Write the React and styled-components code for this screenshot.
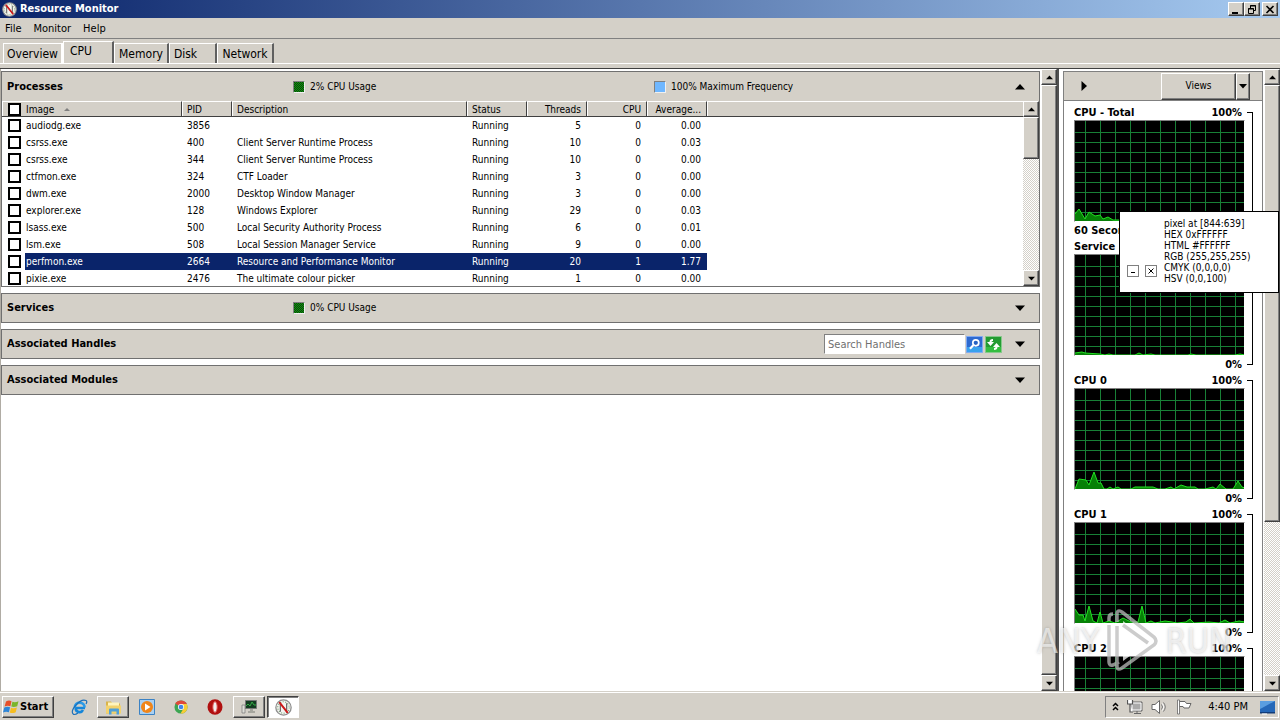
import React from "react";
import styled, { createGlobalStyle, css } from "styled-components";

const GlobalStyle = createGlobalStyle`
  * {
    box-sizing: border-box;
  }

  body {
    margin: 0;
    background: #d4d0c8;
    color: #000;
    font-family: "DejaVu Sans Condensed", Tahoma, "DejaVu Sans", sans-serif;
    font-size: 10px;
    line-height: 14px;
    overflow: hidden;
  }

  button,
  input {
    font: inherit;
    color: inherit;
    margin: 0;
    padding: 0;
    border-radius: 0;
  }
`;

const raised = css`
  border: 1px solid;
  border-color: #fff #404040 #404040 #fff;
  box-shadow: inset -1px -1px 0 #808080;
  background: #d4d0c8;
`;

const Screen = styled.div`
  display: flex;
  flex-direction: column;
  height: 100vh;
`;

/* Title bar and menu */
const TitleBar = styled.header`
  display: flex;
  align-items: center;
  gap: 3px;
  height: 18px;
  flex: none;
  padding: 0 2px;
  background: linear-gradient(90deg, #0a246a, #a6caf0);
  color: #fff;
`;

const Title = styled.h1`
  flex: 1;
  margin: 0;
  font-size: 11px;
  line-height: 16px;
`;

const WindowButtons = styled.div`
  display: flex;
`;

const WindowButton = styled.button`
  ${raised}
  display: flex;
  align-items: center;
  justify-content: center;
  width: 16px;
  height: 14px;
  margin-left: ${(p) => (p.$spaced ? "2px" : "0")};
`;

const MenuBar = styled.nav`
  display: flex;
  gap: 12px;
  height: 21px;
  flex: none;
  padding: 4px 5px 2px;
  border-bottom: 1px solid #808080;
`;

const MenuItem = styled.button`
  border: 0;
  background: none;
  font-size: 11px;
`;

/* Tabs */
const TabStrip = styled.div`
  display: flex;
  align-items: flex-end;
  height: 24px;
  flex: none;
  padding-left: 3px;
`;

const Tab = styled.button`
  width: ${(p) => p.$width}px;
  height: ${(p) => (p.$active ? 22 : 20)}px;
  padding: ${(p) => (p.$active ? "0 14px 3px 0" : p.$left ? "0 14px 0 0" : "0")};
  border: solid #fff;
  border-width: 1px 2px 0 1px;
  border-right-color: ${(p) => (p.$flat ? "#fff" : "#606060")};
  background: #d4d0c8;
  font-size: 12px;
`;

const TabEdge = styled.div`
  height: 6px;
  flex: none;
  border-top: 1px solid #fff;
  border-bottom: 1px solid #404040;
`;

const Main = styled.main`
  display: flex;
  flex: 1;
  min-height: 0;
  border-bottom: 1px solid #d4d0c8;
`;

const LeftPane = styled.section`
  display: flex;
  flex: 1;
  min-width: 0;
  border-left: 1px solid #b0aca4;
  background: #fff;
`;

const Sections = styled.div`
  display: flex;
  flex-direction: column;
  gap: 6px;
  flex: 1;
  min-width: 0;
  padding: 2px 1px 0 0;
`;

const Section = styled.section`
  border: 1px solid #707070;
`;

const SectionHeader = styled.div`
  display: grid;
  grid-template-columns: 286px 361px 1fr auto;
  align-items: center;
  height: ${(p) => (p.$open ? 29 : 28)}px;
  padding: 0 11px 0 5px;
  background: #d4d0c8;
`;

const SectionTitle = styled.h2`
  margin: 0;
  font-size: 11px;
  line-height: 14px;
`;

const Legend = styled.span`
  display: flex;
  align-items: center;
  gap: 5px;
`;

const Swatch = styled.span`
  width: 12px;
  height: 12px;
  border: 1px solid;
  border-color: #808080 #f0f0f0 #f0f0f0 #808080;
  background: ${(p) => (p.$blue ? "#6fb7ff" : "repeating-conic-gradient(#129012 0 25%, #084808 0 50%) 0 0 / 2px 2px")};
`;

const Toggle = styled.button`
  display: flex;
  grid-column: 4;
  padding: 3px;
  border: 0;
  background: none;
`;

const SearchGroup = styled.form`
  display: flex;
  grid-column: 3;
  justify-self: end;
  margin-right: 9px;
  background: #d4d0c8;
`;

const SearchInput = styled.input`
  width: 141px;
  height: 20px;
  padding: 0 3px;
  border: 1px solid;
  border-color: #808080 #fff #fff #808080;
  background: #fff;
  font-size: 11px;

  &::placeholder {
    color: #707070;
    opacity: 1;
  }
`;

const IconButton = styled.button`
  display: flex;
  align-items: center;
  justify-content: center;
  width: 19px;
  height: 20px;
  border: 0;
  background: none;
`;

/* Process list */
const TableFrame = styled.div`
  display: flex;
  height: 185px;
  background: #fff;
`;

const TableClip = styled.div`
  flex: 1;
  min-width: 0;
  overflow: hidden;
`;

const ProcessTable = styled.table`
  width: 100%;
  table-layout: fixed;
  border-collapse: separate;
  border-spacing: 0;
`;

const HeadCell = styled.th`
  height: 16px;
  padding: 1px 5px 0;
  border-top: 1px solid #fff;
  border-bottom: 1px solid #404040;
  border-right: ${(p) => (p.$last ? "0" : "1px solid #404040")};
  box-shadow: inset 1px 0 0 #fff;
  background: #d4d0c8;
  font-weight: normal;
  line-height: 13px;
  text-align: ${(p) => (p.$right ? "right" : "left")};
  white-space: nowrap;
`;

const Cell = styled.td`
  height: 17px;
  padding: 0 6px 0 5px;
  line-height: 17px;
  text-align: ${(p) => (p.$right ? "right" : "left")};
  white-space: nowrap;
  background: ${(p) => (p.$selected ? "#0a246a" : "#fff")};
  color: ${(p) => (p.$selected ? "#fff" : "#000")};
`;

const ImageCell = styled(Cell)`
  padding: 0;
  background: ${(p) => (p.$selected ? "linear-gradient(90deg, #fff 23px, #0a246a 23px)" : "#fff")};
`;

const CheckLabel = styled.label`
  display: flex;
  align-items: center;
  gap: 5px;
  padding-left: ${(p) => (p.$head ? "1px" : "6px")};
`;

const Check = styled.input`
  appearance: none;
  width: 13px;
  height: 13px;
  border: 2px solid #000;
  background: #fff;
`;

/* Scroll bars */
const ScrollBar = styled.div`
  display: flex;
  flex-direction: column;
  flex: none;
  width: 16px;
  background: repeating-conic-gradient(#fff 0 25%, #d4d0c8 0 50%) 0 0 / 2px 2px;
`;

const ScrollButton = styled.button`
  ${raised}
  display: flex;
  align-items: center;
  justify-content: center;
  flex: none;
  height: 16px;
`;

const Track = styled.div`
  flex: 1;
  min-height: 0;
`;

const Thumb = styled.div`
  ${raised}
  height: ${(p) => p.$size};
`;

/* Right pane */
const RightPane = styled.aside`
  display: flex;
  flex: none;
  width: 223px;
  padding-left: 4px;
  border-left: 2px solid #505050;
  background: #fff;
`;

const GraphColumn = styled.div`
  flex: 1;
  margin: 2px 1px 0 0;
  border: solid #808080;
  border-width: 1px 1px 0 1px;
  overflow: hidden;
`;

const GraphToolbar = styled.div`
  display: flex;
  align-items: center;
  justify-content: space-between;
  height: 29px;
  padding: 0 12px 0 15px;
  border-bottom: 1px solid #808080;
  background: #d4d0c8;
`;

const PlainButton = styled.button`
  display: flex;
  border: 0;
  background: none;
`;

const ViewsGroup = styled.div`
  display: flex;
`;

const ViewsButton = styled.button`
  ${raised}
  display: flex;
  align-items: center;
  justify-content: center;
  width: ${(p) => (p.$arrow ? "14px" : "75px")};
  height: 27px;
`;

const GraphList = styled.div`
  padding: 3px 9px 0 10px;
`;

const GraphBlock = styled.figure`
  display: flex;
  gap: 2px;
  margin: 0;
  height: 134px;
`;

const GraphBody = styled.div`
  flex: 1;
`;

const GraphLabels = styled.figcaption`
  display: flex;
  justify-content: space-between;
  height: 16px;
  padding-right: 3px;
  font-size: 11px;
  font-weight: bold;
  line-height: 18px;
`;

const Plot = styled.svg`
  display: block;
  width: 100%;
  height: 102px;
  border: 1px solid;
  border-color: #808080 #fff #fff #808080;
  background: #000;
`;

const Bracket = styled.span`
  width: 6px;
  margin: 8px 0 7px;
  border: 1px solid #000;
  border-left: 0;
`;

/* Colour picker window floating over the graphs */
const Picker = styled.div`
  position: absolute;
  top: 211px;
  right: 1px;
  display: flex;
  gap: 7px;
  width: 160px;
  height: 82px;
  padding: 6px 7px;
  border: 1px solid #000;
  background: #fff;
`;

const PickerButtons = styled.div`
  display: flex;
  align-items: flex-end;
  gap: 6px;
  padding-bottom: 9px;
`;

const PickerButton = styled.button`
  display: flex;
  align-items: center;
  justify-content: center;
  width: 12px;
  height: 12px;
  border: 1px solid #808080;
  background: #fff;
`;

const PickerText = styled.div`
  line-height: 11px;
  white-space: nowrap;
`;

const Watermark = styled.div`
  position: absolute;
  right: 48px;
  bottom: 46px;
  display: flex;
  align-items: center;
  gap: 4px;
  color: rgba(255, 255, 255, 0.6);
  font-size: 34px;
  line-height: 66px;
  text-shadow: 0 0 3px rgba(90, 90, 90, 0.35);
  pointer-events: none;
`;

/* Taskbar */
const Taskbar = styled.footer`
  display: flex;
  align-items: center;
  flex: none;
  height: 28px;
  padding: 1px 1px 0 2px;
  border-top: 1px solid #fff;
  background: #d4d0c8;
`;

const StartButton = styled.button`
  ${raised}
  display: flex;
  align-items: center;
  width: 52px;
  height: 22px;
  font-size: 11px;
  font-weight: bold;
`;

const TaskList = styled.div`
  display: flex;
  flex: 1;
  gap: 2px;
  padding-left: 9px;
`;

const TaskButton = styled.button`
  display: flex;
  align-items: center;
  justify-content: center;
  width: 32px;
  height: 22px;
  border: 0;
  background: none;
  ${(p) => p.$open && raised}
  ${(p) =>
    p.$pressed &&
    css`
      border: 1px solid;
      border-color: #404040 #fff #fff #404040;
      box-shadow: inset 1px 1px 0 #808080;
      background: #fff;
    `}
`;

const Tray = styled.div`
  display: flex;
  align-items: center;
  gap: 8px;
  height: 22px;
  padding: 0 2px 0 6px;
  border: 1px solid;
  border-color: #808080 #fff #fff #808080;
`;

const Clock = styled.time`
  padding: 0 3px 0 8px;
  font-size: 11px;
`;

const processes = [
  { image: "audiodg.exe", pid: 3856, description: "", threads: 5, cpu: 0, average: "0.00" },
  { image: "csrss.exe", pid: 400, description: "Client Server Runtime Process", threads: 10, cpu: 0, average: "0.03" },
  { image: "csrss.exe", pid: 344, description: "Client Server Runtime Process", threads: 10, cpu: 0, average: "0.00" },
  { image: "ctfmon.exe", pid: 324, description: "CTF Loader", threads: 3, cpu: 0, average: "0.00" },
  { image: "dwm.exe", pid: 2000, description: "Desktop Window Manager", threads: 3, cpu: 0, average: "0.00" },
  { image: "explorer.exe", pid: 128, description: "Windows Explorer", threads: 29, cpu: 0, average: "0.03" },
  { image: "lsass.exe", pid: 500, description: "Local Security Authority Process", threads: 6, cpu: 0, average: "0.01" },
  { image: "lsm.exe", pid: 508, description: "Local Session Manager Service", threads: 9, cpu: 0, average: "0.00" },
  { image: "perfmon.exe", pid: 2664, description: "Resource and Performance Monitor", threads: 20, cpu: 1, average: "1.77", selected: true },
  { image: "pixie.exe", pid: 2476, description: "The ultimate colour picker", threads: 1, cpu: 0, average: "0.00" },
];

// Each point is [x, height above the base line]
const graphs = [
  {
    title: "CPU - Total",
    footer: "60 Seconds",
    points: [[0, 7], [4, 12], [7, 7], [10, 2], [14, 9], [20, 5], [25, 6], [28, 2], [33, 4], [38, 1], [44, 1], [60, 2], [90, 1], [130, 2], [170, 1]],
  },
  {
    title: "Service",
    points: [[0, 2], [7, 3], [10, 2], [25, 1], [30, 0], [34, 1], [38, 0], [60, 0], [64, 2], [68, 0], [76, 1], [80, 0], [113, 0], [116, 1], [121, 0], [160, 0], [165, 1], [170, 0]],
  },
  {
    title: "CPU 0",
    points: [[0, 0], [4, 10], [11, 9], [14, 4], [19, 17], [23, 6], [26, 6], [29, 0], [32, 0], [35, 2], [38, 0], [43, 2], [46, 0], [56, 0], [60, 2], [78, 2], [83, 0], [90, 0], [96, 2], [99, 0], [106, 4], [112, 2], [120, 2], [123, 0], [130, 0], [138, 2], [141, 0], [145, 5], [151, 0], [158, 0], [163, 8], [167, 2], [170, 1]],
  },
  {
    title: "CPU 1",
    points: [[0, 14], [4, 8], [8, 8], [10, 2], [14, 17], [18, 2], [22, 0], [25, 11], [28, 0], [34, 2], [40, 0], [48, 5], [56, 1], [63, 1], [67, 17], [71, 0], [76, 2], [80, 0], [90, 2], [97, 1], [102, 0], [111, 1], [115, 4], [119, 0], [134, 1], [144, 0], [150, 3], [155, 0], [164, 2], [170, 1]],
  },
  { title: "CPU 2", points: [[0, 8], [10, 5], [20, 2], [170, 1]] },
];

const Arrow = ({ dir = "down", size = 7 }) => {
  const turn = { down: 0, up: 180, right: 270 }[dir];
  return (
    <svg width={size} height={size} viewBox="0 0 10 10" aria-hidden="true">
      <path d="M0 2.5h10L5 8z" transform={`rotate(${turn} 5 5)`} />
    </svg>
  );
};

const MonitorIcon = ({ size = 15 }) => (
  <svg width={size} height={size} viewBox="0 0 16 16" aria-hidden="true">
    <circle cx="8" cy="8" r="7.2" fill="#f4f4f0" stroke="#8d8d8d" strokeWidth="1.2" />
    <circle cx="8" cy="8" r="5.4" fill="none" stroke="#77a477" strokeDasharray="1 1.4" />
    <path d="M5 12V4l6 8V4" fill="none" stroke="#555" />
    <path d="M4 3l8 10" stroke="#d01818" strokeWidth="1.8" />
  </svg>
);

const WindowsLogo = () => (
  <svg width="17" height="16" viewBox="0 0 17 16" aria-hidden="true">
    <path d="M3 2.5Q6 .8 8.5 2.3L7.4 7.2Q4.5 6 1.6 7.5z" fill="#e8502a" />
    <path d="M9.4 2.8Q12 4 15.5 2.3L14.2 7.2Q11 8.6 8.3 7.6z" fill="#7bb52c" />
    <path d="M1.3 8.5Q4.2 7.2 7.1 8.3L5.9 13.2Q3 12 0 13.4z" fill="#2f86d8" />
    <path d="M8 8.7Q11 9.9 13.9 8.4L12.7 13.2Q9.6 14.8 6.8 13.6z" fill="#f6bd20" />
  </svg>
);

const InternetExplorerIcon = () => (
  <svg width="17" height="17" viewBox="0 0 17 17" aria-hidden="true">
    <path d="M14 9H4.8A3.8 3.8 0 0 0 12 11" fill="none" stroke="#1686d9" strokeWidth="2.6" />
    <path d="M3.8 8.5a4.9 4.9 0 0 1 9.8 0" fill="none" stroke="#2b9be8" strokeWidth="2.6" />
    <path d="M2 15C-1 11 9-1 15 1.5c1.3.7.7 2.5 0 3.5M2 15c1.3 1 3.6 0 5-1" fill="none" stroke="#1c6fb8" strokeWidth="1.2" />
  </svg>
);

const FolderIcon = () => (
  <svg width="17" height="17" viewBox="0 0 17 16" aria-hidden="true">
    <path d="M1 14V2h5l1.5 2H15v10z" fill="#d9b44a" />
    <path d="M3 3h11v8H3z" fill="#fff4bd" />
    <path d="M1 6h15v8H1z" fill="#f3d26c" />
    <path d="M4 15v-5q0-1 1-1h8q1 0 1 1v5h-2.5v-3h-5v3z" fill="#4f9fd8" />
  </svg>
);

const MediaIcon = () => (
  <svg width="16" height="16" viewBox="0 0 16 16" aria-hidden="true">
    <path d="M.5.5h15v15H.5z" fill="#a9d0f2" stroke="#3b82c4" />
    <circle cx="8" cy="8" r="6" fill="#f08519" />
    <path d="M6 4.5v7L11.5 8z" fill="#fff" />
  </svg>
);

const ChromeIcon = () => (
  <svg width="14" height="14" viewBox="0 0 16 16" aria-hidden="true">
    <circle cx="8" cy="8" r="7.5" fill="#3ca552" />
    <path d="M8 8L1.5 4.3A7.5 7.5 0 0 1 14.7 4.7z" fill="#e0483a" />
    <path d="M8 4.7h6.7A7.5 7.5 0 0 1 7.5 15.5L11 9.5z" fill="#f8cd35" />
    <circle cx="8" cy="8" r="3.5" fill="#fff" />
    <circle cx="8" cy="8" r="2.7" fill="#4285e8" />
  </svg>
);

const OperaIcon = () => (
  <svg width="16" height="16" viewBox="0 0 16 16" aria-hidden="true">
    <ellipse cx="8" cy="8" rx="7.5" ry="7.7" fill="#b01010" />
    <ellipse cx="8" cy="8" rx="2.2" ry="5.4" fill="#f2eeee" stroke="#da4a4a" />
  </svg>
);

const ComputerIcon = () => (
  <svg width="16" height="16" viewBox="0 0 16 16" aria-hidden="true">
    <path d="M1 6h3v8H1z" fill="#deded8" stroke="#777" strokeWidth=".7" />
    <path d="M4.5 1.5h11v8h-11z" fill="#123b20" stroke="#777" />
    <path d="M5 7l2-2 2 2 2-4 2 3h2" fill="none" stroke="#39b54a" strokeWidth=".9" />
    <path d="M9 10h3v2h2v2H7v-2h2z" fill="#a6a69e" />
  </svg>
);

const SearchIcon = () => (
  <svg width="17" height="17" viewBox="0 0 17 17" aria-hidden="true">
    <path d="M.5.5h16v16H.5z" fill="#2e6ad0" stroke="#82aaf0" />
    <path d="M1 11h15v5H1z" fill="#38a1ed" />
    <circle cx="9.8" cy="6.8" r="3" fill="#2862c4" stroke="#fff" strokeWidth="1.7" />
    <path d="M7.5 9L4 12.8" stroke="#fff" strokeWidth="2.2" />
  </svg>
);

const RefreshIcon = () => (
  <svg width="17" height="17" viewBox="0 0 17 17" aria-hidden="true">
    <path d="M.5.5h16v16H.5z" fill="#239b32" stroke="#85c98a" />
    <path d="M1 11h15v5H1z" fill="#34bd40" />
    <path d="M8 3Q4.500 3 4.500 6H2l3.500 4L9 6H6.500Q6.500 5 8 5zM9 14q3.500 0 3.500-3H15l-3.500-4L8 11h2.500q0 1-1.500 1z" fill="#fff" />
  </svg>
);

const TrayNetworkIcon = () => (
  <svg width="16" height="16" viewBox="0 0 16 16" aria-hidden="true">
    <path d="M4 3h11v9H4z" fill="#aaa" stroke="#666" />
    <path d="M5 4h9v7H5z" fill="none" stroke="#fff" />
    <path d="M7 14.5h7M10 12v2" fill="none" stroke="#666" />
    <path d="M.5 1v4h5V1M3 5v8h3" fill="#fff" stroke="#555" strokeWidth="1.2" />
  </svg>
);

const SpeakerIcon = () => (
  <svg width="17" height="16" viewBox="0 0 17 16" aria-hidden="true">
    <path d="M1 5.5h3l4.5-4v13l-4.5-4H1z" fill="#fff" stroke="#666" />
    <path d="M10.5 5.5q2 2.5 0 5M12.5 3.500q3.500 4.500 0 9" fill="none" stroke="#777" />
    <path d="M11.5 4.5q2.8 3.5 0 7" fill="none" stroke="#fff" />
  </svg>
);

const FlagIcon = () => (
  <svg width="16" height="16" viewBox="0 0 16 16" aria-hidden="true">
    <path d="M3 2.5h6l1.5 2H15L13 9H8L7 7.5H3z" fill="#fff" stroke="#666" />
    <path d="M1.5 1h2v14h-2z" fill="#fff" stroke="#666" strokeWidth=".8" />
  </svg>
);

const DesktopIcon = () => (
  <svg width="17" height="15" viewBox="0 0 17 15" aria-hidden="true">
    <path d="M1 1h15v11H1z" fill="#2568b8" />
    <path d="M1 1h15L3 8 1 9z" fill="#5a9ee0" />
    <path d="M1 12h15v1.5H1z" fill="#123c78" />
    <path d="M3 14h5" stroke="#fff" />
  </svg>
);

const PlayMark = () => (
  <svg width="58" height="66" viewBox="0 0 56 66" aria-hidden="true">
    <path d="M19 13L46 33 19 53z" fill="#fff" fillOpacity=".75" />
    <path
      d="M5 13v-3q0-4 4-4M5 17v37q0 4 4 3l6-3M13 14V6q0-5 5-2l32 25q4 4 0 8L18 60q-5 3-5-2V18M19 17l25 18"
      fill="none"
      stroke="#bbb"
      strokeOpacity=".75"
      strokeWidth="3.5"
    />
  </svg>
);

const Scroller = ({ size }) => (
  <ScrollBar>
    <ScrollButton aria-label="Scroll up"><Arrow dir="up" /></ScrollButton>
    <Track><Thumb $size={size} /></Track>
    <ScrollButton aria-label="Scroll down"><Arrow /></ScrollButton>
  </ScrollBar>
);

const verticals = Array.from({ length: 11 }, (_, i) => 10 + i * 15);
const horizontals = Array.from({ length: 9 }, (_, i) => 11 + i * 10);

const Graph = ({ title, footer, points }) => {
  const line = points.map(([x, h]) => `${x},${100 - h}`).join(" ");
  return (
    <GraphBlock>
      <GraphBody>
        <GraphLabels><span>{title}</span><span>100%</span></GraphLabels>
        <Plot viewBox="0 0 169 100" preserveAspectRatio="none" aria-label={title}>
          <g stroke="#188036" shapeRendering="crispEdges">
            {verticals.map((x) => <path key={x} d={`M${x}.5 0V100`} />)}
            {horizontals.map((y) => <path key={y} d={`M0 ${y}.5H169`} />)}
          </g>
          <polygon points={`0,101 ${line} 170,101`} fill="#078007" />
          <polyline points={line} fill="none" stroke="#22e022" />
        </Plot>
        <GraphLabels><span>{footer}</span><span>0%</span></GraphLabels>
      </GraphBody>
      <Bracket />
    </GraphBlock>
  );
};

const App = () => (
  <>
    <GlobalStyle />
    <Screen>
      <TitleBar>
        <MonitorIcon />
        <Title>Resource Monitor</Title>
        <WindowButtons>
          <WindowButton aria-label="Minimize">
            <svg width="10" height="9" viewBox="0 0 10 9"><path d="M1 7h6v2H1z" /></svg>
          </WindowButton>
          <WindowButton aria-label="Restore">
            <svg width="10" height="9" viewBox="0 0 10 9">
              <path d="M3.5 3V.5h5v5h-2M3 1h6M1.5 3.5h5v5h-5zM1 4h6" fill="none" stroke="#000" />
            </svg>
          </WindowButton>
          <WindowButton $spaced aria-label="Close">
            <svg width="10" height="9" viewBox="0 0 10 9">
              <path d="M1.5 1l7 7M8.5 1l-7 7" stroke="#000" strokeWidth="1.6" />
            </svg>
          </WindowButton>
        </WindowButtons>
      </TitleBar>
      <MenuBar>
        <MenuItem>File</MenuItem>
        <MenuItem>Monitor</MenuItem>
        <MenuItem>Help</MenuItem>
      </MenuBar>
      <TabStrip role="tablist">
        <Tab role="tab" $width={60} $flat>Overview</Tab>
        <Tab role="tab" $width={51} $active aria-selected="true">CPU</Tab>
        <Tab role="tab" $width={55}>Memory</Tab>
        <Tab role="tab" $width={48} $left>Disk</Tab>
        <Tab role="tab" $width={57}>Network</Tab>
      </TabStrip>
      <TabEdge />

      <Main>
        <LeftPane>
          <Sections>
            <Section>
              <SectionHeader $open>
                <SectionTitle>Processes</SectionTitle>
                <Legend><Swatch />2% CPU Usage</Legend>
                <Legend><Swatch $blue />100% Maximum Frequency</Legend>
                <Toggle aria-label="Collapse Processes"><Arrow dir="up" size={10} /></Toggle>
              </SectionHeader>
              <TableFrame>
                <TableClip>
                  <ProcessTable>
                    <colgroup>
                      <col width="180" />
                      <col width="50" />
                      <col width="235" />
                      <col width="60" />
                      <col width="60" />
                      <col width="60" />
                      <col width="60" />
                      <col />
                    </colgroup>
                    <thead>
                      <tr>
                        <HeadCell>
                          <CheckLabel $head>
                            <Check type="checkbox" aria-label="Select all" />
                            Image
                            <svg width="16" height="6" viewBox="0 0 16 6"><path d="M5 4h6L8 1z" fill="#808080" /></svg>
                          </CheckLabel>
                        </HeadCell>
                        <HeadCell>PID</HeadCell>
                        <HeadCell>Description</HeadCell>
                        <HeadCell>Status</HeadCell>
                        <HeadCell $right>Threads</HeadCell>
                        <HeadCell $right>CPU</HeadCell>
                        <HeadCell $right>Average...</HeadCell>
                        <HeadCell $last />
                      </tr>
                    </thead>
                    <tbody>
                      {processes.map((p) => (
                        <tr key={p.pid}>
                          <ImageCell $selected={p.selected}>
                            <CheckLabel>
                              <Check type="checkbox" />
                              {p.image}
                            </CheckLabel>
                          </ImageCell>
                          <Cell $selected={p.selected}>{p.pid}</Cell>
                          <Cell $selected={p.selected}>{p.description}</Cell>
                          <Cell $selected={p.selected}>Running</Cell>
                          <Cell $selected={p.selected} $right>{p.threads}</Cell>
                          <Cell $selected={p.selected} $right>{p.cpu}</Cell>
                          <Cell $selected={p.selected} $right>{p.average}</Cell>
                          <Cell />
                        </tr>
                      ))}
                    </tbody>
                  </ProcessTable>
                </TableClip>
                <Scroller size="42px" />
              </TableFrame>
            </Section>

            <Section>
              <SectionHeader>
                <SectionTitle>Services</SectionTitle>
                <Legend><Swatch />0% CPU Usage</Legend>
                <Toggle aria-label="Expand Services"><Arrow size={10} /></Toggle>
              </SectionHeader>
            </Section>

            <Section>
              <SectionHeader>
                <SectionTitle>Associated Handles</SectionTitle>
                <SearchGroup onSubmit={(e) => e.preventDefault()}>
                  <SearchInput placeholder="Search Handles" aria-label="Search Handles" />
                  <IconButton aria-label="Search"><SearchIcon /></IconButton>
                  <IconButton type="button" aria-label="Refresh"><RefreshIcon /></IconButton>
                </SearchGroup>
                <Toggle aria-label="Expand Associated Handles"><Arrow size={10} /></Toggle>
              </SectionHeader>
            </Section>

            <Section>
              <SectionHeader>
                <SectionTitle>Associated Modules</SectionTitle>
                <Toggle aria-label="Expand Associated Modules"><Arrow size={10} /></Toggle>
              </SectionHeader>
            </Section>
          </Sections>
          <Scroller size="100%" />
        </LeftPane>

        <RightPane>
          <GraphColumn>
            <GraphToolbar>
              <PlainButton aria-label="Hide graphs"><Arrow dir="right" size={10} /></PlainButton>
              <ViewsGroup>
                <ViewsButton>Views</ViewsButton>
                <ViewsButton $arrow aria-label="View options"><Arrow size={8} /></ViewsButton>
              </ViewsGroup>
            </GraphToolbar>
            <GraphList>
              {graphs.map((g) => <Graph key={g.title} {...g} />)}
            </GraphList>
          </GraphColumn>
          <Scroller size="74%" />
        </RightPane>
      </Main>

      <Taskbar>
        <StartButton><WindowsLogo />Start</StartButton>
        <TaskList>
          <TaskButton aria-label="Internet Explorer"><InternetExplorerIcon /></TaskButton>
          <TaskButton $open aria-label="Explorer"><FolderIcon /></TaskButton>
          <TaskButton aria-label="Media Player"><MediaIcon /></TaskButton>
          <TaskButton aria-label="Chrome"><ChromeIcon /></TaskButton>
          <TaskButton aria-label="Opera"><OperaIcon /></TaskButton>
          <TaskButton $open aria-label="Task Manager"><ComputerIcon /></TaskButton>
          <TaskButton $pressed aria-label="Resource Monitor"><MonitorIcon size={17} /></TaskButton>
        </TaskList>
        <Tray>
          <svg width="7" height="10" viewBox="0 0 7 10">
            <path d="M1 4l2.5-2.5L6 4M1 8l2.5-2.5L6 8" fill="none" stroke="#000" strokeWidth="1.5" />
          </svg>
          <TrayNetworkIcon />
          <SpeakerIcon />
          <FlagIcon />
          <Clock>4:40 PM</Clock>
          <DesktopIcon />
        </Tray>
      </Taskbar>
    </Screen>

    <Picker>
      <PickerButtons>
        <PickerButton aria-label="Minimize picker">
          <svg width="8" height="8" viewBox="0 0 8 8"><path d="M2 5.5h4" stroke="#000" /></svg>
        </PickerButton>
        <PickerButton aria-label="Close picker">
          <svg width="8" height="8" viewBox="0 0 8 8"><path d="M1.5 1.5l5 5M6.5 1.5l-5 5" stroke="#000" /></svg>
        </PickerButton>
      </PickerButtons>
      <PickerText>
        <div>pixel at [844:639]</div>
        <div>HEX 0xFFFFFF</div>
        <div>HTML #FFFFFF</div>
        <div>RGB (255,255,255)</div>
        <div>CMYK (0,0,0,0)</div>
        <div>HSV (0,0,100)</div>
      </PickerText>
    </Picker>
    <Watermark><span>ANY</span><PlayMark /><span>RUN</span></Watermark>
  </>
);

export default App;
